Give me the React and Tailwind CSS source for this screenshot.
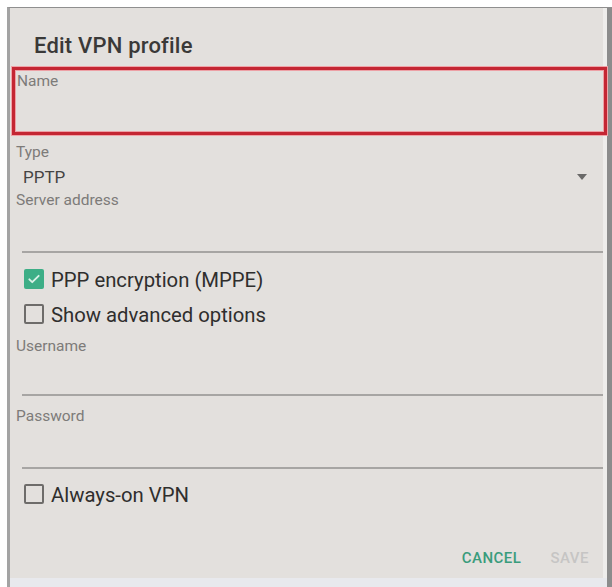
import React from 'react'

function Label({ children, className = '' }) {
  return <div className={`text-[15.5px] leading-[18px] text-[#7d7b79] ${className}`}>{children}</div>
}

function Underline({ className = '' }) {
  return <div className={`h-[2px] bg-[#a7a5a3] ml-[12px] mr-[4px] ${className}`} />
}

function Checkbox({ checked, label, className = '' }) {
  return (
    <div className={`flex items-start ${className}`}>
      {checked ? (
        <div className="mt-[1px] ml-[14px] w-[20px] h-[20px] rounded-[2px] bg-[#3dae86] flex items-center justify-center">
          <svg width="14" height="14" viewBox="0 0 24 24" fill="none">
            <path d="M4 12.5l5 5L20 6.5" stroke="#d9f0e6" strokeWidth="3.2" strokeLinecap="round" strokeLinejoin="round" />
          </svg>
        </div>
      ) : (
        <div className="mt-[1px] ml-[14px] w-[20px] h-[20px] rounded-[2px] border-2 border-[#6e6c6a]" />
      )}
      <span className="ml-[7px] text-[20.3px] leading-[24px] text-[#2f2e2d]">{label}</span>
    </div>
  )
}

export default function App() {
  return (
    <div className="w-[612px] h-[587px] bg-white pt-[7px] pl-[7px] overflow-hidden" style={{ fontFamily: 'Roboto, "Noto Sans", sans-serif' }}>
      <div className="w-[605px] h-[580px] bg-[#e3e0dd] border-t border-t-[#8f8f8f] border-l-[3px] border-l-[#a3a3a3] border-r-[5px] border-r-[#8c8c8c] shadow-[inset_-4px_0_0_#eeedeb] flex flex-col">
        <div className="mt-[24px] ml-[24px] text-[22px] leading-[28px] font-medium tracking-[0.2px] text-[#3a3938]">Edit VPN profile</div>

        {/* Name field, outlined in red */}
        <div className="mt-[7px] ml-[2px] w-[595px] h-[68px] border-[3px] border-[#c42633] shadow-[0_0_0_1px_#f0a3a8,inset_0_0_0_1px_#eda0a5] pt-[2px] pl-[2px]">
          <Label>Name</Label>
        </div>

        <Label className="mt-[8px] ml-[6px]">Type</Label>
        <div className="mt-[6px] ml-[13px] mr-[20px] flex items-center justify-between">
          <span className="text-[17px] leading-[20px] text-[#454443]">PPTP</span>
          <svg width="10" height="6" viewBox="0 0 10 6">
            <path d="M0 0h10L5 6z" fill="#6a6968" />
          </svg>
        </div>
        <Label className="mt-[4px] ml-[6px]">Server address</Label>
        <Underline className="mt-[42px]" />

        <Checkbox checked label="PPP encryption (MPPE)" className="mt-[15px]" />
        <Checkbox label="Show advanced options" className="mt-[11px]" />

        <Label className="mt-[10px] ml-[6px]">Username</Label>
        <Underline className="mt-[39px]" />

        <Label className="mt-[11px] ml-[6px]">Password</Label>
        <Underline className="mt-[42px]" />

        <Checkbox label="Always-on VPN" className="mt-[14px]" />

        <div className="mt-[42px] mr-[18px] flex justify-end gap-[29px] text-[15px] leading-[18px] font-medium tracking-[0.5px]">
          <span className="text-[#3a9c7c]">CANCEL</span>
          <span className="text-[#c6c5c4]">SAVE</span>
        </div>

        <div className="mt-auto h-[9px] bg-[#e8e9ed]" />
      </div>
    </div>
  )
}
